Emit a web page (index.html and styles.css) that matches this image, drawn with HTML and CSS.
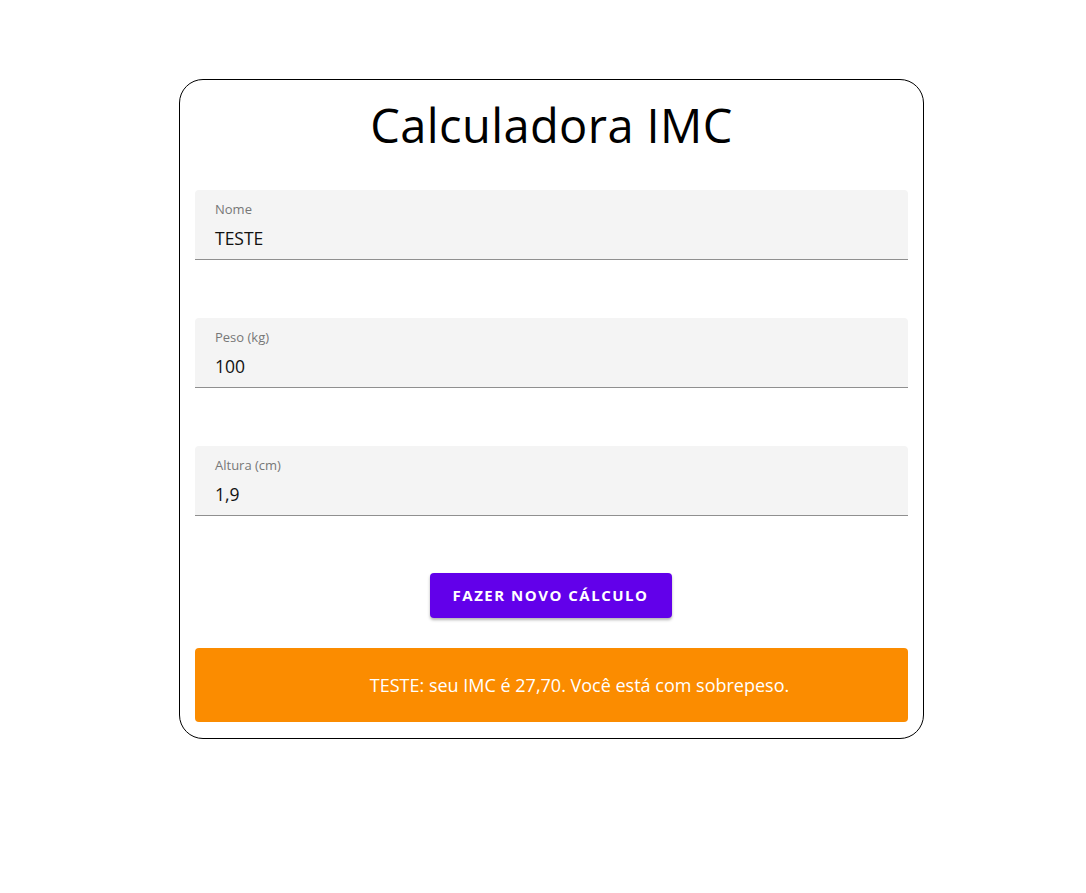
FILE: index.html
```html
<!DOCTYPE html>
<html lang="pt">
<head>
<meta charset="utf-8">
<title>Calculadora IMC</title>
<link rel="stylesheet" href="styles.css">
</head>
<body>
<main class="card">
  <h1 class="title">Calculadora IMC</h1>
  <form class="form">
    <div class="field">
      <label class="label">Nome</label>
      <div class="value">TESTE</div>
    </div>
    <div class="field">
      <label class="label">Peso (kg)</label>
      <div class="value">100</div>
    </div>
    <div class="field">
      <label class="label">Altura (cm)</label>
      <div class="value">1,9</div>
    </div>
    <div class="actions">
      <button type="button" class="btn">Fazer novo cálculo</button>
    </div>
  </form>
  <div class="result">TESTE: seu IMC é 27,70. Você está com sobrepeso.</div>
</main>
</body>
</html>
```
FILE: styles.css
```css
html, body {
  margin: 0;
  padding: 0;
  background: #fff;
}
body {
  font-family: "Open Sans", "Noto Sans", sans-serif;
  color: #000;
}
.card {
  box-sizing: border-box;
  width: 745px;
  height: 660px;
  margin: 79px 0 0 179px;
  border: 1px solid #000;
  border-radius: 24px;
  padding: 0 15px 16px;
  display: flex;
  flex-direction: column;
}
.title {
  margin: 0;
  height: 111px;
  line-height: 90px;
  font-weight: 400;
  font-size: 47px;
  text-align: center;
  letter-spacing: 0.4px;
}
.form {
  display: flex;
  flex-direction: column;
  gap: 58px;
}
.field {
  box-sizing: border-box;
  height: 70px;
  background: #f4f4f4;
  border-radius: 4px 4px 0 0;
  border-bottom: 1px solid #8f8f8f;
  padding: 11px 20px 0;
  display: flex;
  flex-direction: column;
}
.label {
  font-size: 13px;
  line-height: 16px;
  color: #777;
}
.value {
  margin-top: 11px;
  font-size: 17.5px;
  line-height: 20px;
  color: #111;
}
.actions {
  display: flex;
  justify-content: center;
  margin-top: -1px;
  padding-right: 2px;
}
.btn {
  width: 242px;
  height: 45px;
  background: #6200ea;
  color: #fff;
  border: none;
  border-radius: 4px;
  font-family: inherit;
  font-weight: 700;
  font-size: 15px;
  letter-spacing: 1.5px;
  text-transform: uppercase;
  box-shadow: 0 2px 3px rgba(0,0,0,0.3);
  cursor: pointer;
}
.result {
  margin-top: 30px;
  height: 75px;
  box-sizing: border-box;
  background: #fb8c00;
  border-radius: 4px;
  color: #fff;
  font-size: 18px;
  display: flex;
  align-items: center;
  justify-content: center;
  padding-left: 56px;
}
```
